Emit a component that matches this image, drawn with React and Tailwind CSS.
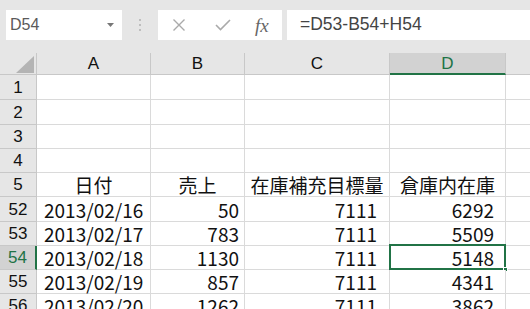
import React from 'react';

const cols = ['A', 'B', 'C', 'D'];

const rows = [
  { n: '1', h: 'h-[25px]', cells: ['', '', '', ''] },
  { n: '2', h: 'h-[25px]', cells: ['', '', '', ''] },
  { n: '3', h: 'h-[24px]', cells: ['', '', '', ''] },
  { n: '4', h: 'h-[24px]', cells: ['', '', '', ''] },
  { n: '5', h: 'h-[24px]', cells: ['日付', '売上', '在庫補充目標量', '倉庫内在庫'], head: true },
  { n: '52', h: 'h-[25px]', cells: ['2013/02/16', '50', '7111', '6292'] },
  { n: '53', h: 'h-[24px]', cells: ['2013/02/17', '783', '7111', '5509'] },
  { n: '54', h: 'h-[24px]', cells: ['2013/02/18', '1130', '7111', '5148'], active: true },
  { n: '55', h: 'h-[24px]', cells: ['2013/02/19', '857', '7111', '4341'] },
  { n: '56', h: 'h-[24px]', cells: ['2013/02/20', '1262', '7111', '3862'] },
];

// padding per column for right-aligned numbers
const numPad = ['', 'pr-[5px]', 'pr-[12px]', 'pr-[11px]'];

const cellFont = { fontFamily: '"Noto Sans CJK JP", "Liberation Sans", sans-serif' };

const Cell = ({ value, col, head, selected, h }) => {
  const base = `${h} relative flex items-center border-r border-b border-[#dadada] bg-white text-[19px] text-[#111] whitespace-nowrap overflow-visible`;
  let align = 'justify-end ' + numPad[col];
  if (head) align = 'justify-center';
  else if (col === 0) align = 'justify-start pl-[7px]';
  return (
    <div className={`${base} ${align}`} style={cellFont}>
      {value}
      {selected && (
        <div className="absolute -left-px -top-[2px] -right-px -bottom-px border-2 border-[#217346]">
          <div className="absolute -right-[4px] -bottom-[4px] w-[5px] h-[5px] bg-[#217346] border border-white" />
        </div>
      )}
    </div>
  );
};

const App = () => {
  return (
    <div
      className="w-[530px] h-[309px] overflow-hidden bg-[#e6e6e6] leading-none"
      style={{ fontFamily: '"Liberation Sans", "Noto Sans CJK JP", sans-serif' }}
    >
      {/* Formula bar */}
      <div className="h-[53px] flex pt-[10px] pl-[6px]">
        <div className="w-[116px] h-[30px] bg-white flex items-center justify-between pl-[4px] pr-[8px]">
          <span className="text-[16px] text-[#5a5a5a]">D54</span>
          <svg width="7" height="4" viewBox="0 0 7 4">
            <path d="M0 0 L7 0 L3.5 4 Z" fill="#777" />
          </svg>
        </div>
        <div className="w-[36px] h-[30px] flex flex-col items-center justify-center gap-[3px]">
          <div className="w-[2px] h-[2px] bg-[#b0b0b0] rounded-full" />
          <div className="w-[2px] h-[2px] bg-[#b0b0b0] rounded-full" />
          <div className="w-[2px] h-[2px] bg-[#b0b0b0] rounded-full" />
        </div>
        <div className="w-[124px] h-[30px] bg-white flex items-center">
          <svg width="14" height="14" viewBox="0 0 14 14" className="ml-[14px]">
            <path d="M1.5 1.5 L12.5 12.5 M12.5 1.5 L1.5 12.5" stroke="#aaa" strokeWidth="1.4" />
          </svg>
          <svg width="16" height="12" viewBox="0 0 16 12" className="ml-[29px]">
            <path d="M1 6 L5.5 10.5 L15 1" stroke="#aaa" strokeWidth="1.6" fill="none" />
          </svg>
          <span
            className="ml-[24px] text-[19px] italic text-[#666]"
            style={{ fontFamily: '"Liberation Serif", serif' }}
          >
            fx
          </span>
        </div>
        <div className="ml-[5px] flex-1 h-[30px] bg-white flex items-center pl-[13px]">
          <span className="text-[17.5px] text-[#444]">=D53-B54+H54</span>
        </div>
      </div>

      {/* Sheet grid */}
      <div className="grid grid-cols-[37px_114px_94px_145px_116px_1fr]">
        {/* Column headers */}
        <div className="h-[22px] relative border-r border-b border-[#c8c8c8] bg-[#e6e6e6]">
          <svg width="18" height="17" viewBox="0 0 18 17" className="absolute right-[2px] bottom-[1px]">
            <path d="M0 17 L18 17 L18 0 Z" fill="#b4b4b4" />
          </svg>
        </div>
        {cols.map((c) => (
          <div
            key={c}
            className={
              c === 'D'
                ? 'h-[22px] flex items-center justify-center text-[17px] text-[#217346] bg-[#d2d2d2] border-r border-[#c8c8c8] border-b-2 border-b-[#217346]'
                : 'h-[22px] flex items-center justify-center text-[17px] text-[#111] bg-[#e6e6e6] border-r border-b border-[#c8c8c8]'
            }
          >
            {c}
          </div>
        ))}
        <div className="h-[22px] bg-[#e6e6e6] border-b border-[#c8c8c8]" />

        {rows.map((r) => (
          <React.Fragment key={r.n}>
            <div
              className={
                r.active
                  ? `${r.h} flex items-center justify-center text-[17px] text-[#217346] bg-[#d2d2d2] border-b border-[#c8c8c8] border-r-2 border-r-[#217346]`
                  : `${r.h} flex items-center justify-center text-[17px] text-[#111] bg-[#e6e6e6] border-r border-b border-[#c8c8c8]`
              }
            >
              {r.n}
            </div>
            {r.cells.map((v, i) => (
              <Cell key={i} h={r.h} value={v} col={i} head={r.head} selected={r.active && i === 3} />
            ))}
            <div className={`${r.h} bg-white border-b border-[#dadada]`} />
          </React.Fragment>
        ))}
      </div>
    </div>
  );
};

export default App;
